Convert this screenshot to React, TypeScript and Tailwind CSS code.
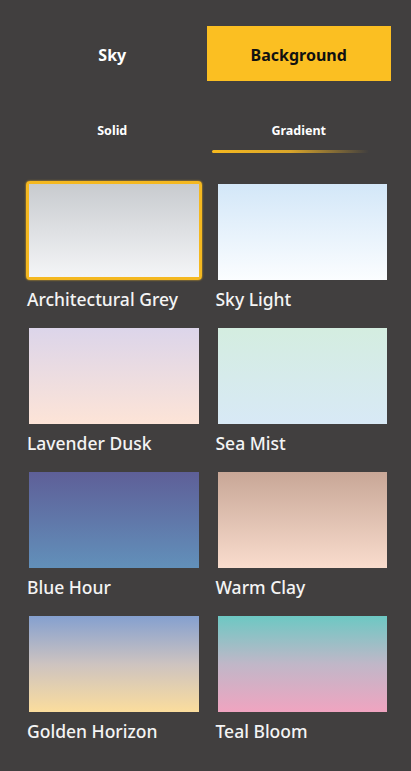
const swatches = [
  { name: 'Architectural Grey', from: '#c8cbcf', to: '#f4f5f7', selected: true },
  { name: 'Sky Light', from: '#d3e7f8', to: '#fbfdff' },
  { name: 'Lavender Dusk', from: '#dcd5ea', to: '#fde4d7' },
  { name: 'Sea Mist', from: '#d4ede0', to: '#d8e9f6' },
  { name: 'Blue Hour', from: '#5e5f98', to: '#6290ba' },
  { name: 'Warm Clay', from: '#c8a797', to: '#f9dccd' },
  { name: 'Golden Horizon', from: '#85a0cf', via: '#cdc3c0', to: '#fbdd9d' },
  { name: 'Teal Bloom', from: '#6dc8c3', via: '#c0b7c8', to: '#f0a4c0' },
]

export default function App() {
  return (
    <div
      className="min-h-[771px] w-[411px] bg-[#413f3f] text-white"
      style={{ fontFamily: '"Noto Sans", "Open Sans", sans-serif' }}
    >
      {/* Main tabs */}
      <div className="grid grid-cols-2 gap-[2px] px-[20px] pt-[26px]">
        <button className="h-[55px] pt-[3px] text-[16px] font-bold text-white">Sky</button>
        <button className="h-[55px] bg-[#fbbf22] pt-[3px] text-[16px] font-bold text-[#111]">
          Background
        </button>
      </div>

      {/* Sub tabs */}
      <div className="grid grid-cols-2 gap-[2px] px-[20px] pt-[41px]">
        <div className="flex flex-col items-center">
          <span className="text-[12.5px] font-bold leading-[18px]">Solid</span>
        </div>
        <div className="flex flex-col items-center">
          <span className="text-[12.5px] font-bold leading-[18px]">Gradient</span>
          <div className="mt-[10px] h-[3px] w-full pl-[5px] pr-[22px]">
            <div className="h-full rounded-full bg-gradient-to-r from-[#f6b91e] via-[#d9a52a] to-transparent" />
          </div>
        </div>
      </div>

      {/* Swatch grid */}
      <div className="grid grid-cols-2 gap-x-[13px] gap-y-[14px] pl-[26px] pr-[21px] pt-[28px]">
        {swatches.map((s) => (
          <div key={s.name}>
            <div
              className={`h-[99px] ${
                s.selected
                  ? 'rounded-[4px] border-[3px] border-[#f4b820] shadow-[0_0_2px_#f4b820]'
                  : 'px-[3px] pt-[3px]'
              }`}
            >
              <div
                className="h-full w-full"
                style={{
                  background: s.via
                    ? `linear-gradient(to bottom, ${s.from}, ${s.via}, ${s.to})`
                    : `linear-gradient(to bottom, ${s.from}, ${s.to})`,
                }}
              />
            </div>
            <div className="mt-[7px] pl-[1px] text-[17.5px] font-medium leading-[24px] text-[#f4f4f4]">
              {s.name}
            </div>
          </div>
        ))}
      </div>
    </div>
  )
}
